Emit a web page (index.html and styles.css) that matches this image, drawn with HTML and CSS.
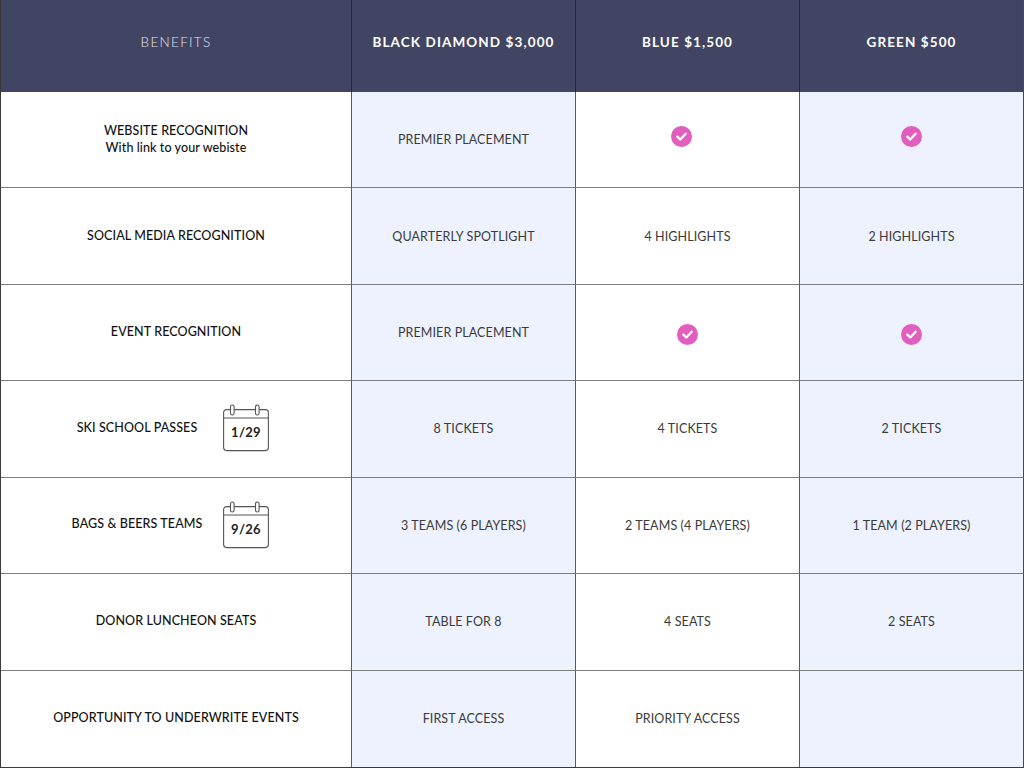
FILE: index.html
```html
<!DOCTYPE html>
<html>
<head>
<meta charset="utf-8">
<link rel="stylesheet" href="styles.css">
</head>
<body>
<div class="table">
  <div class="cell head head-light">BENEFITS</div>
  <div class="cell head">BLACK DIAMOND $3,000</div>
  <div class="cell head">BLUE $1,500</div>
  <div class="cell head">GREEN $500</div>

  <div class="cell benefit"><div>WEBSITE RECOGNITION<br><span class="sub">With link to your webiste</span></div></div>
  <div class="cell tint">PREMIER PLACEMENT</div>
  <div class="cell"><span class="check check-a"><svg viewBox="0 0 20 20" width="21" height="21"><circle cx="10" cy="10" r="10" fill="#e15ebf"/><path d="M6 10.2 L8.8 12.8 L14 7.4" fill="none" stroke="#fff" stroke-width="2.2" stroke-linecap="round" stroke-linejoin="round"/></svg></span></div>
  <div class="cell tint"><span class="check"><svg viewBox="0 0 20 20" width="21" height="21"><circle cx="10" cy="10" r="10" fill="#e15ebf"/><path d="M6 10.2 L8.8 12.8 L14 7.4" fill="none" stroke="#fff" stroke-width="2.2" stroke-linecap="round" stroke-linejoin="round"/></svg></span></div>

  <div class="cell benefit">SOCIAL MEDIA RECOGNITION</div>
  <div class="cell tint">QUARTERLY SPOTLIGHT</div>
  <div class="cell">4 HIGHLIGHTS</div>
  <div class="cell tint">2 HIGHLIGHTS</div>

  <div class="cell benefit">EVENT RECOGNITION</div>
  <div class="cell tint">PREMIER PLACEMENT</div>
  <div class="cell"><span class="check check-b"><svg viewBox="0 0 20 20" width="21" height="21"><circle cx="10" cy="10" r="10" fill="#e15ebf"/><path d="M6 10.2 L8.8 12.8 L14 7.4" fill="none" stroke="#fff" stroke-width="2.2" stroke-linecap="round" stroke-linejoin="round"/></svg></span></div>
  <div class="cell tint"><span class="check check-b"><svg viewBox="0 0 20 20" width="21" height="21"><circle cx="10" cy="10" r="10" fill="#e15ebf"/><path d="M6 10.2 L8.8 12.8 L14 7.4" fill="none" stroke="#fff" stroke-width="2.2" stroke-linecap="round" stroke-linejoin="round"/></svg></span></div>

  <div class="cell benefit with-icon"><span class="label">SKI SCHOOL PASSES</span>
    <span class="cal"><svg viewBox="0 0 46 48" width="46" height="48"><rect x="0.6" y="5.6" width="44.8" height="41" rx="3" fill="#fff" stroke="#555" stroke-width="1.1"/><line x1="0.6" y1="14" x2="45.4" y2="14" stroke="#555" stroke-width="1.1"/><rect x="7.5" y="1" width="3.6" height="10" rx="1.8" fill="#fff" stroke="#555" stroke-width="1.1"/><rect x="32.5" y="1" width="3.6" height="10" rx="1.8" fill="#fff" stroke="#555" stroke-width="1.1"/></svg><span class="cal-text">1/29</span></span>
  </div>
  <div class="cell tint">8 TICKETS</div>
  <div class="cell">4 TICKETS</div>
  <div class="cell tint">2 TICKETS</div>

  <div class="cell benefit with-icon"><span class="label">BAGS &amp; BEERS TEAMS</span>
    <span class="cal"><svg viewBox="0 0 46 48" width="46" height="48"><rect x="0.6" y="5.6" width="44.8" height="41" rx="3" fill="#fff" stroke="#555" stroke-width="1.1"/><line x1="0.6" y1="14" x2="45.4" y2="14" stroke="#555" stroke-width="1.1"/><rect x="7.5" y="1" width="3.6" height="10" rx="1.8" fill="#fff" stroke="#555" stroke-width="1.1"/><rect x="32.5" y="1" width="3.6" height="10" rx="1.8" fill="#fff" stroke="#555" stroke-width="1.1"/></svg><span class="cal-text">9/26</span></span>
  </div>
  <div class="cell tint">3 TEAMS (6 PLAYERS)</div>
  <div class="cell">2 TEAMS (4 PLAYERS)</div>
  <div class="cell tint">1 TEAM (2 PLAYERS)</div>

  <div class="cell benefit">DONOR LUNCHEON SEATS</div>
  <div class="cell tint">TABLE FOR 8</div>
  <div class="cell">4 SEATS</div>
  <div class="cell tint">2 SEATS</div>

  <div class="cell benefit last">OPPORTUNITY TO UNDERWRITE EVENTS</div>
  <div class="cell tint last">FIRST ACCESS</div>
  <div class="cell last">PRIORITY ACCESS</div>
  <div class="cell tint last"></div>
</div>
</body>
</html>
```

FILE: styles.css
```css
html, body {
  margin: 0;
  padding: 0;
  background: #fff;
}

.table {
  width: 1024px;
  height: 768px;
  box-sizing: border-box;
  display: grid;
  grid-template-columns: 350px 224px 224px 1fr;
  grid-template-rows: 92px repeat(7, 1fr);
  border-left: 1px solid #3a3a3a;
  border-right: 1px solid #4a4a4a;
  border-bottom: 1px solid #3a3a3a;
  font-family: "Lato", "Open Sans", sans-serif;
}

.cell {
  display: flex;
  align-items: center;
  justify-content: center;
  text-align: center;
  box-sizing: border-box;
  border-bottom: 1px solid #7d7d7d;
  border-left: 1px solid #5a5a5a;
  font-size: 12.5px;
  color: #3a3a3a;
  letter-spacing: 0.1px;
}

.cell:nth-child(4n+1) {
  border-left: none;
}

.cell.last {
  border-bottom: none;
}

.tint {
  background: #eef2fe;
}

.head {
  background: #414563;
  color: #ffffff;
  font-weight: 700;
  font-size: 13.5px;
  letter-spacing: 1.1px;
  border-left-color: #23253a;
  border-bottom: none;
  padding-bottom: 8px;
}

.head-light {
  font-weight: 300;
  color: #e4e6ee;
  letter-spacing: 1.3px;
}

.benefit {
  color: #111;
  font-weight: 500;
  font-size: 12.5px;
  line-height: 17px;
  padding-bottom: 2px;
}

.sub {
  text-transform: none;
  font-size: 12.5px;
}

.with-icon {
  justify-content: flex-start;
  padding-left: 61px;
  gap: 11px;
  padding-bottom: 3px;
}

.label {
  width: 150px;
  text-align: center;
}

.cal {
  position: relative;
  width: 46px;
  height: 48px;
  display: inline-block;
  margin-top: 2px;
}

.cal svg {
  display: block;
}

.cal-text {
  position: absolute;
  left: 0;
  right: 0;
  top: 20px;
  text-align: center;
  font-size: 13px;
  font-weight: 700;
  color: #222;
  letter-spacing: 0.3px;
}

.check {
  display: inline-flex;
  margin-bottom: 6px;
}

.check svg {
  display: block;
}

.check-a {
  margin-right: 12px;
}

.check-b {
  margin-top: 4px;
  margin-bottom: 0;
}
```
